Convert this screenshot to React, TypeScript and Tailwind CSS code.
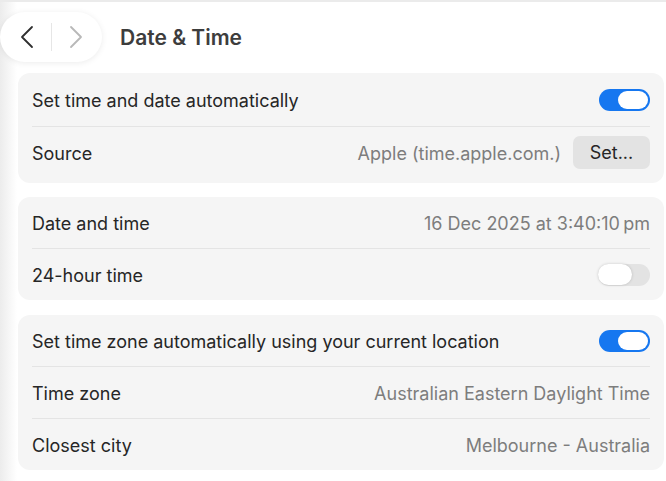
import React from "react";

const font = { fontFamily: "Inter, 'Noto Sans', sans-serif" };

function Toggle({ on }: { on: boolean }) {
  if (on) {
    return (
      <div className="flex h-[22px] w-[51px] items-center justify-end rounded-full bg-[#1677f0] px-[2px]">
        <div className="h-[18px] w-[30px] rounded-full bg-white" />
      </div>
    );
  }
  return (
    <div className="flex h-[22px] w-[52px] items-center rounded-full bg-[#e3e3e3]">
      <div className="h-[21px] w-[34px] rounded-full bg-white shadow-[0_0_3px_rgba(0,0,0,0.18)]" />
    </div>
  );
}

function Row({
  label,
  children,
  className = "h-[51px]",
}: {
  label: string;
  children?: React.ReactNode;
  className?: string;
}) {
  return (
    <div className={`flex items-center justify-between px-[14px] ${className}`}>
      <span className="pt-[2px] text-[18px] text-[#262626]">{label}</span>
      <div className="flex items-center gap-[12px]">{children}</div>
    </div>
  );
}

function Value({ children }: { children: React.ReactNode }) {
  return <span className="pt-[2px] text-[18px] text-[#7d7d7d]">{children}</span>;
}

function Divider() {
  return <div className="mx-[14px] h-px bg-[#e4e4e4]" />;
}

export default function App() {
  return (
    <div
      style={font}
      className="h-[481px] w-[666px] overflow-hidden border-t-2 border-[#ebebeb] bg-[linear-gradient(to_right,#ececec,#ffffff_17px)]"
    >
      <header className="flex h-[71px] items-center">
        <div className="mb-[2px] flex h-[50px] w-[102px] items-center rounded-full bg-white shadow-[0_1px_6px_rgba(0,0,0,0.08)]">
          <svg width="102" height="50" viewBox="0 0 102 50">
            <polyline
              points="32,15 22,25 32,35"
              fill="none"
              stroke="#2f2f2f"
              strokeWidth="1.8"
              strokeLinecap="round"
              strokeLinejoin="round"
            />
            <line x1="51.5" y1="11" x2="51.5" y2="39" stroke="#e6e6e6" strokeWidth="1" />
            <polyline
              points="71,15 81,25 71,35"
              fill="none"
              stroke="#b8b8b8"
              strokeWidth="1.8"
              strokeLinecap="round"
              strokeLinejoin="round"
            />
          </svg>
        </div>
        <h1 className="ml-[18px] text-[21px] font-semibold text-[#3d3d3d]">Date &amp; Time</h1>
      </header>

      <div className="flex flex-col gap-[14px] pl-[18px] pr-[2px]">
        <section className="rounded-[12px] bg-[#f5f5f5] pb-[6px]">
          <Row label="Set time and date automatically" className="h-[53px]">
            <Toggle on />
          </Row>
          <Divider />
          <Row label="Source" className="h-[50px]">
            <Value>Apple (time.apple.com.)</Value>
            <button className="h-[33px] w-[77px] rounded-[7px] bg-[#e3e3e3] pt-px text-[18px] text-[#262626]">
              Set...
            </button>
          </Row>
        </section>

        <section className="rounded-[12px] bg-[#f5f5f5]">
          <Row label="Date and time">
            <Value>16 Dec 2025 at 3:40:10{"\u2009"}pm</Value>
          </Row>
          <Divider />
          <Row label="24-hour time">
            <Toggle on={false} />
          </Row>
        </section>

        <section className="mt-px rounded-[12px] bg-[#f5f5f5]">
          <Row label="Set time zone automatically using your current location">
            <Toggle on />
          </Row>
          <Divider />
          <Row label="Time zone">
            <Value>Australian Eastern Daylight Time</Value>
          </Row>
          <Divider />
          <Row label="Closest city">
            <Value>Melbourne - Australia</Value>
          </Row>
        </section>
      </div>
    </div>
  );
}
